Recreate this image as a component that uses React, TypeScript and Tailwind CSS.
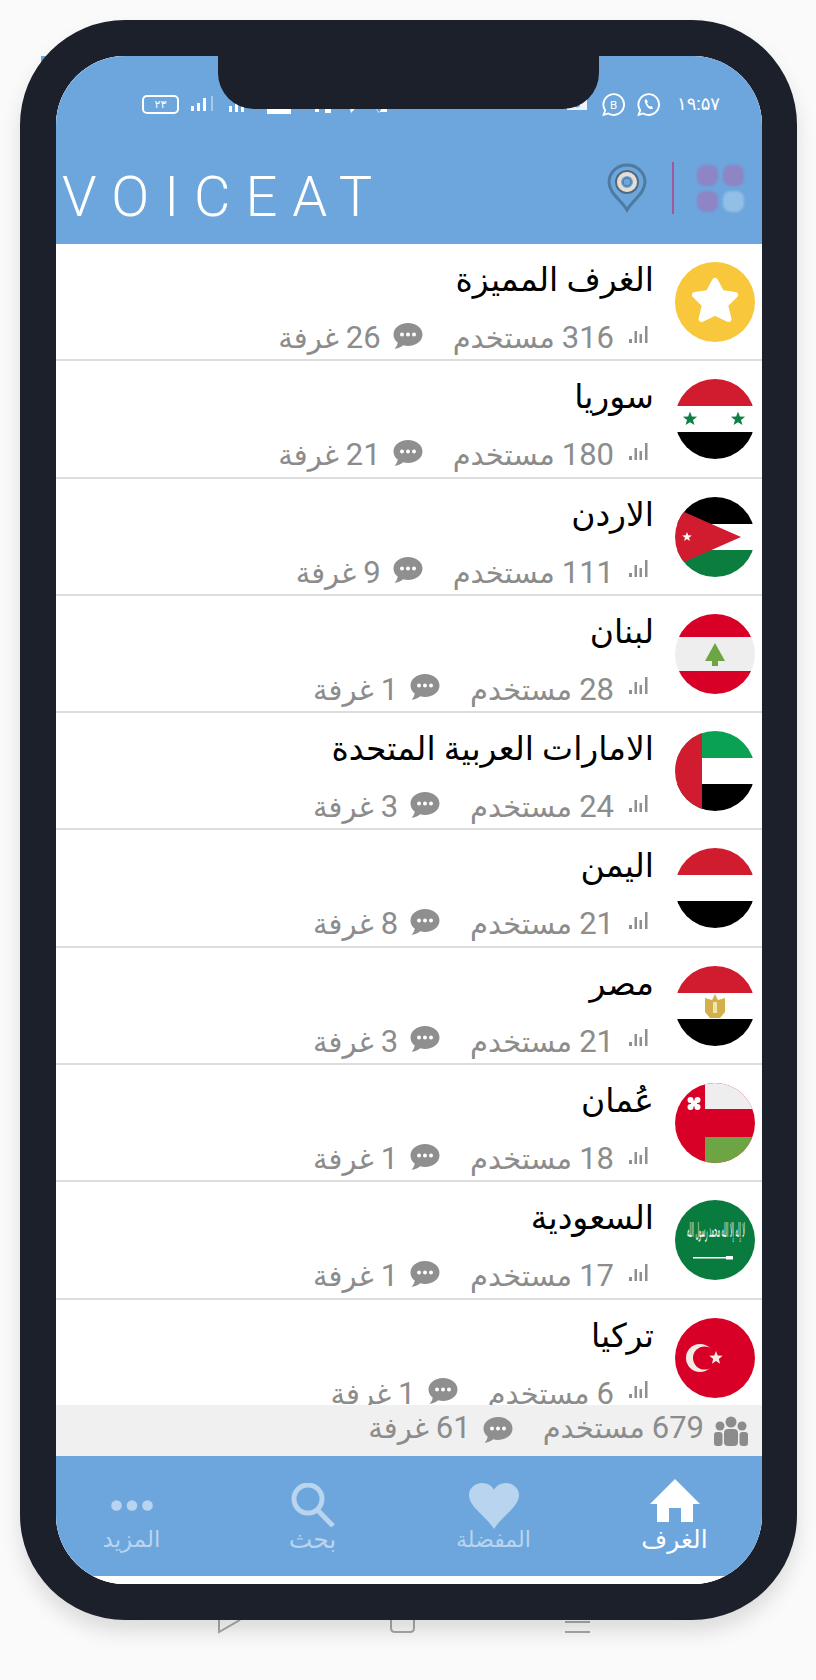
interface Room { name: string; users: number; rooms: number; flag: string; }

const ROOMS: Room[] = [
  { name: 'الغرف المميزة', users: 316, rooms: 26, flag: 'star' },
  { name: 'سوريا', users: 180, rooms: 21, flag: 'sy' },
  { name: 'الاردن', users: 111, rooms: 9, flag: 'jo' },
  { name: 'لبنان', users: 28, rooms: 1, flag: 'lb' },
  { name: 'الامارات العربية المتحدة', users: 24, rooms: 3, flag: 'ae' },
  { name: 'اليمن', users: 21, rooms: 8, flag: 'ye' },
  { name: 'مصر', users: 21, rooms: 3, flag: 'eg' },
  { name: 'عُمان', users: 18, rooms: 1, flag: 'om' },
  { name: 'السعودية', users: 17, rooms: 1, flag: 'sa' },
  { name: 'تركيا', users: 6, rooms: 1, flag: 'tr' },
];

const RED = '#d01c2e';

function Star5({ cx, cy, r, fill }: { cx: number; cy: number; r: number; fill: string }) {
  const pts = Array.from({ length: 10 }, (_, i) => {
    const a = (Math.PI / 5) * i - Math.PI / 2;
    const d = i % 2 === 0 ? r : r * 0.42;
    return `${cx + d * Math.cos(a)},${cy + d * Math.sin(a)}`;
  }).join(' ');
  return <polygon points={pts} fill={fill} />;
}

function FlagArt({ flag }: { flag: string }) {
  switch (flag) {
    case 'star':
      return (
        <>
          <rect width="80" height="80" fill="#f8c73c" />
          <path d="M40 19 L46.500 31 L60 33 L50 43 L53.500 57 L40 50.500 L26.500 57 L30 43 L20 33 L33.500 31 Z" fill="#fff" stroke="#fff" strokeWidth="6" strokeLinejoin="round" />
        </>
      );
    case 'sy':
      return (
        <>
          <rect width="80" height="27" fill={RED} />
          <rect y="53" width="80" height="27" fill="#000" />
          <Star5 cx={15} cy={40} r={7.5} fill="#0d8044" />
          <Star5 cx={63} cy={40} r={7.5} fill="#0d8044" />
        </>
      );
    case 'jo':
      return (
        <>
          <rect width="80" height="27" fill="#000" />
          <rect y="53" width="80" height="27" fill="#0b7d3e" />
          <polygon points="0,11 66,40 0,69" fill={RED} />
          <Star5 cx={12} cy={40} r={5} fill="#fff" />
        </>
      );
    case 'lb':
      return (
        <>
          <rect width="80" height="80" fill="#eeeeee" />
          <rect width="80" height="23" fill="#d80027" />
          <rect y="57" width="80" height="23" fill="#d80027" />
          <path d="M40 29 L50 47 L43 47 L43 52 L37 52 L37 47 L30 47 Z" fill="#6da544" />
        </>
      );
    case 'ae':
      return (
        <>
          <rect width="80" height="27" fill="#0aa252" />
          <rect y="53" width="80" height="27" fill="#000" />
          <rect width="27" height="80" fill={RED} />
        </>
      );
    case 'ye':
      return (
        <>
          <rect width="80" height="27" fill={RED} />
          <rect y="53" width="80" height="27" fill="#000" />
        </>
      );
    case 'eg':
      return (
        <>
          <rect width="80" height="27" fill={RED} />
          <rect y="53" width="80" height="27" fill="#000" />
          <path d="M40 28 L43 34 L50 32 L50 46 L45 52 L35 52 L30 46 L30 32 L37 34 Z" fill="#d4b04c" />
          <rect x="38" y="36" width="4" height="11" fill="#f2e3a8" />
        </>
      );
    case 'om':
      return (
        <>
          <rect width="80" height="80" fill="#d80027" />
          <rect x="30" width="50" height="26" fill="#eeeeee" />
          <rect x="30" y="54" width="50" height="26" fill="#6da544" />
          <g fill="#fff">
            <circle cx="15.500" cy="17" r="3" /><circle cx="22.500" cy="17" r="3" />
            <circle cx="15.500" cy="24" r="3" /><circle cx="22.500" cy="24" r="3" />
            <rect x="16" y="17.500" width="6" height="6" />
          </g>
        </>
      );
    case 'sa':
      return (
        <>
          <rect width="80" height="80" fill="#0a7b3e" />
          <text x="41" y="37" textAnchor="middle" fontSize="20" fill="#fff" fontFamily="'DejaVu Sans', sans-serif" textLength="58" lengthAdjust="spacingAndGlyphs">لا إله إلا الله محمد رسول الله</text>
          <rect x="18" y="57" width="33" height="1.500" fill="#fff" />
          <rect x="51" y="56" width="7" height="3.500" fill="#fff" />
        </>
      );
    case 'tr':
      return (
        <>
          <rect width="80" height="80" fill="#d80027" />
          <circle cx="25" cy="40" r="14" fill="#f4ece4" />
          <circle cx="29.500" cy="40" r="11.500" fill="#d80027" />
          <Star5 cx={41} cy={40} r={7} fill="#f4ece4" />
        </>
      );
    default:
      return null;
  }
}

function Flag({ flag }: { flag: string }) {
  return (
    <svg width="80" height="80" viewBox="0 0 80 80" className="shrink-0 rounded-full">
      <FlagArt flag={flag} />
    </svg>
  );
}

function Bars() {
  return (
    <svg width="22" height="20" viewBox="0 0 22 20" className="shrink-0 -translate-y-[6px]" fill="#8f8f8f">
      <rect x="1" y="14" width="3" height="4" />
      <rect x="6.500" y="6" width="2.500" height="12" />
      <rect x="11.500" y="9" width="2.500" height="9" />
      <rect x="17" y="1" width="2.500" height="17" />
    </svg>
  );
}

function Chat() {
  return (
    <svg width="30" height="28" viewBox="0 0 30 28" className="shrink-0">
      <path d="M15 1 C23.300 1 29.500 6.200 29.500 12.500 C29.500 18.800 23.300 24 15 24 C13.300 24 11.700 23.800 10.200 23.300 C7.500 25.500 4.500 26.500 1.500 26.800 C3.500 24.800 4.500 22.700 4.700 20.600 C2 18.500 0.500 15.700 0.500 12.500 C0.500 6.200 6.700 1 15 1 Z" fill="#8f8f8f" />
      <circle cx="9" cy="12.500" r="2" fill="#fff" />
      <circle cx="15" cy="12.500" r="2" fill="#fff" />
      <circle cx="21" cy="12.500" r="2" fill="#fff" />
    </svg>
  );
}

function Count({ n, label }: { n: number; label: string }) {
  return (
    <span className="inline-flex items-center gap-[7px]">
      <span className="text-[31px]">{n}</span>
      <span className="text-[29px]">{label}</span>
    </span>
  );
}

function Stats({ users, rooms }: { users: number; rooms: number }) {
  return (
    <div className="flex items-center leading-[40px] text-[#8c8c8c] whitespace-nowrap">
      <span className="mr-[4px]"><Bars /></span>
      <span className="mr-[14px]"><Count n={users} label="مستخدم" /></span>
      <span className="mr-[30px] -translate-y-[5px]"><Chat /></span>
      <span className="mr-[12px]"><Count n={rooms} label="غرفة" /></span>
    </div>
  );
}

function StatusBar() {
  return (
    <div className="flex h-[20px] items-center justify-between pl-[86px] pr-[42px] mt-[38px] text-white">
      <div className="flex items-center gap-[12px]">
        <div className="relative flex h-[19px] w-[37px] items-center justify-center rounded-[5px] border-2 border-white text-[11px] leading-none">٢٣</div>
        <svg width="26" height="16" viewBox="0 0 26 16" fill="#fff">
          <rect x="0" y="10" width="3" height="5" /><rect x="6" y="7" width="3" height="8" /><rect x="12" y="2" width="3" height="13" />
          <rect x="20" y="0" width="2" height="15" fill="#a8c9ea" />
        </svg>
        {/* the rest of the left icons sit mostly under the notch */}
        <svg width="160" height="20" viewBox="0 0 160 20" fill="#fff">
          <rect x="0" y="12" width="3" height="6" /><rect x="6" y="8" width="3" height="10" /><rect x="12" y="6" width="3" height="12" />
          <rect x="38" y="10" width="24" height="10" />
          <rect x="86" y="10" width="4" height="8" /><rect x="96" y="10" width="6" height="9" />
          <path d="M120 10 H130 L122 19 Z" /><path d="M143 10 L150 19 L153 14 L158 10 L158 18 L150 18 Z" />
        </svg>
      </div>
      <div className="flex items-center gap-[10px]">
        <svg width="20" height="11" viewBox="0 0 20 11" className="mr-[4px]"><rect width="20" height="11" fill="#eef4fb" /><circle cx="10" cy="5.500" r="3" fill="#6ca6dd" /></svg>
        <svg width="25" height="25" viewBox="0 0 24 24" fill="none" stroke="#fff" strokeWidth="1.800">
          <path d="M12 2 a10 10 0 1 1 -5 18.600 L2.500 22 L4 17.500 A10 10 0 0 1 12 2 Z" />
          <text x="12" y="16" textAnchor="middle" fontSize="11" fill="#fff" stroke="none" fontFamily="Roboto, sans-serif">B</text>
        </svg>
        <svg width="25" height="25" viewBox="0 0 24 24" fill="none" stroke="#fff" strokeWidth="1.800">
          <path d="M12 2 a10 10 0 1 1 -5 18.600 L2.500 22 L4 17.500 A10 10 0 0 1 12 2 Z" />
          <path d="M8.500 7.500 C8 10 9.500 13 11.500 15 C13 16 15 16.800 16.500 15.800 L15 13.500 L13.500 14 C12 13.200 11 12 10.500 10.500 L11.500 9.500 L10 7 Z" fill="#fff" stroke="none" />
        </svg>
        <span className="ml-[6px] text-[18px] leading-none">۱۹:۵۷</span>
      </div>
    </div>
  );
}

function Header() {
  return (
    <div className="relative flex h-[188px] shrink-0 flex-col bg-[#6ca6dd]">
      <StatusBar />
      <div className="mt-[48px] flex items-start justify-between pl-[6px] pr-[18px]">
        <span className="mt-[3px] font-light text-[56px] leading-[64px] tracking-[15px] text-white">VOICEAT</span>
        <div className="flex items-center">
          <svg width="40" height="50" viewBox="0 0 40 50" fill="none">
            <path d="M20 47 C14 37 2 30 2 19 A18 17 0 0 1 38 19 C38 30 26 37 20 47 Z" stroke="#4d7a9e" strokeWidth="3" fill="#6ca6dd" />
            <circle cx="20" cy="19" r="11" stroke="#4f6a80" strokeWidth="2" />
            <circle cx="20" cy="19" r="8" stroke="#e9dcd0" strokeWidth="4" />
            <circle cx="20" cy="19" r="4" stroke="#4f7da2" strokeWidth="1.500" />
          </svg>
          <div className="ml-[25px] mr-[23px] h-[52px] w-[2px] bg-[#a4559b]" />
          <div className="grid grid-cols-2 gap-[5px] blur-[1px]">
            <div className="h-[21px] w-[21px] rounded-[8px] bg-[#8d85c4]" />
            <div className="h-[21px] w-[21px] rounded-[8px] bg-[#8d85c4]" />
            <div className="h-[21px] w-[21px] rounded-[8px] bg-[#8d85c4]" />
            <div className="h-[21px] w-[21px] rounded-[8px] bg-[#92bfe6]" />
          </div>
        </div>
      </div>
    </div>
  );
}

function RoomRow({ room }: { room: Room }) {
  return (
    <div dir="rtl" className="flex h-[117.3px] shrink-0 border-b-2 border-[#dddddd] pr-[7px] pt-[18px]">
      <Flag flag={room.flag} />
      <div className="mr-[21px] -mt-[8px]">
        <div className="text-[33px] leading-[52px] text-black whitespace-nowrap">{room.name}</div>
        <div className="mt-[12px]"><Stats users={room.users} rooms={room.rooms} /></div>
      </div>
    </div>
  );
}

function SummaryBar() {
  return (
    <div dir="rtl" className="flex h-[51px] shrink-0 items-center bg-[#f0f0f0] pr-[14px] leading-[40px] text-[#8c8c8c] whitespace-nowrap">
      <svg width="34" height="30" viewBox="0 0 34 30" fill="#8c8c8c" className="shrink-0">
        <circle cx="17" cy="6" r="5.500" />
        <circle cx="6" cy="10" r="4.500" />
        <circle cx="28" cy="10" r="4.500" />
        <rect x="10" y="13" width="14" height="17" rx="4" />
        <rect x="0" y="16" width="8.500" height="14" rx="3" />
        <rect x="25.500" y="16" width="8.500" height="14" rx="3" />
      </svg>
      <span className="mr-[10px]"><Count n={679} label="مستخدم" /></span>
      <span className="mr-[30px] -translate-y-[1px]"><Chat /></span>
      <span className="mr-[12px]"><Count n={61} label="غرفة" /></span>
    </div>
  );
}

function TabBar() {
  const dim = '#b9d4ef';
  return (
    <div dir="ltr" className="-ml-[15px] grid h-[120px] w-[724px] shrink-0 grid-cols-4 bg-[#6ca6dd] leading-[36px] text-[#b9d4ef]">
      <div className="flex flex-col items-center">
        <div className="h-[66px] pt-[44px]">
          <svg width="42" height="11" viewBox="0 0 42 11" fill={dim} className="block">
            <circle cx="5.500" cy="5.500" r="5.300" /><circle cx="21" cy="5.500" r="5.300" /><circle cx="36.500" cy="5.500" r="5.300" />
          </svg>
        </div>
        <span className="text-[23px]">المزيد</span>
      </div>
      <div className="flex flex-col items-center">
        <div className="h-[66px] pt-[27px]">
          <svg width="44" height="44" viewBox="0 0 44 44" fill="none" stroke={dim} className="block">
            <circle cx="17" cy="16" r="14" strokeWidth="5" />
            <path d="M26.500 27 L42 43" strokeWidth="5" />
          </svg>
        </div>
        <span className="text-[25px]">بحث</span>
      </div>
      <div className="flex flex-col items-center">
        <div className="h-[66px] pt-[27px]">
          <svg width="52" height="46" viewBox="0 0 52 46" fill={dim} className="block">
            <path d="M26 46 C18 33 1 24 1 12 C1 5 7 0 14 0 C20 0 24 3 26 7 C28 3 32 0 38 0 C45 0 51 5 51 12 C51 24 34 33 26 46 Z" />
          </svg>
        </div>
        <span className="text-[22px]">المفضلة</span>
      </div>
      <div className="flex flex-col items-center text-white">
        <div className="h-[66px] pt-[23px]">
          <svg width="50" height="43" viewBox="0 0 50 43" fill="#fff" className="block">
            <path d="M25 0 L50 25 L43 25 L43 43 L31 43 L31 29 L19 29 L19 43 L7 43 L7 25 L0 25 Z" />
          </svg>
        </div>
        <span className="text-[25px]">الغرف</span>
      </div>
    </div>
  );
}

export default function App() {
  return (
    <div className="relative h-[1680px] w-[816px] overflow-hidden bg-[#fafafa] pl-[20px] pt-[20px] font-['Roboto','Noto_Sans','DejaVu_Sans',sans-serif]">
      {/* app screenshot behind the phone frame */}
      <div className="absolute left-[41px] top-[56px] h-[1520px] w-[725px] bg-[#6ca6dd]" />
      <svg width="380" height="14" viewBox="0 0 380 14" fill="none" stroke="#a8a8a8" strokeWidth="2" className="absolute left-[218px] top-[1620px]">
        <path d="M1 0 V12 L22 0" />
        <path d="M173 0 V8 Q173 12 177 12 H192 Q196 12 196 8 V0" />
        <path d="M347 2 H372 M347 12 H372" />
      </svg>

      <div className="relative h-[1600px] w-[777px] rounded-[105px] border-[36px] border-r-[35px] border-[#1c202b] bg-white shadow-[0_12px_20px_rgba(0,0,0,0.12)]">
        <div className="relative flex h-full w-full flex-col overflow-hidden rounded-[69px] bg-white">
          <Header />
          <div className="flex min-h-0 flex-1 flex-col overflow-hidden bg-white">
            {ROOMS.map(r => <RoomRow key={r.flag} room={r} />)}
          </div>
          <SummaryBar />
          <TabBar />
          <div className="h-[8px] shrink-0 bg-white" />
          {/* notch */}
          <div className="absolute left-[162px] top-0 h-[53px] w-[381px] rounded-b-[36px] bg-[#1c202b]" />
        </div>
      </div>
    </div>
  );
}
